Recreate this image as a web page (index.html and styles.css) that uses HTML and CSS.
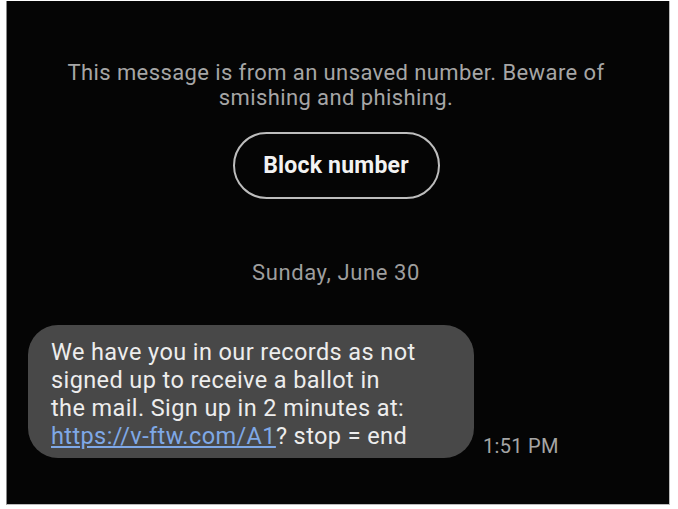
FILE: index.html
```html
<!DOCTYPE html>
<html>
<head>
<meta charset="utf-8">
<link rel="stylesheet" href="styles.css">
</head>
<body>
<div class="screen">
  <p class="warning">This message is from an unsaved number. Beware of<br>smishing and phishing.</p>
  <div class="block-row"><button class="block-btn">Block number</button></div>
  <p class="date">Sunday, June 30</p>
  <div class="msg-row">
    <div class="bubble">We have you in our records as not<br>signed up to receive a ballot in<br>the mail. Sign up in 2 minutes at:<br><a class="link" href="#">https://v-ftw.com/A1</a>? stop = end</div>
    <span class="time">1:51 PM</span>
  </div>
</div>
</body>
</html>
```
FILE: styles.css
```css
html, body {
  margin: 0;
  padding: 0;
  background: #ffffff;
}
body {
  width: 678px;
  height: 509px;
  padding: 1px 0 0 6px;
  box-sizing: border-box;
  font-family: Roboto, "Liberation Sans", sans-serif;
}
.screen {
  width: 664px;
  height: 504px;
  background: #050505;
  border-right: 1px solid #bbb;
  border-bottom: 1px solid #bbb;
  border-left: 1px solid #888;
  box-sizing: border-box;
  display: flex;
  flex-direction: column;
  padding-top: 59px;
}
.warning {
  margin: 0;
  text-align: center;
  color: #a6a6a6;
  font-size: 22px;
  line-height: 25px;
  letter-spacing: 0.4px;
  padding-right: 4px;
}
.block-row {
  display: flex;
  justify-content: center;
  margin-top: 22px;
}
.block-btn {
  width: 207px;
  height: 67px;
  border: 2px solid #bdbdbd;
  border-radius: 34px;
  background: transparent;
  color: #f2f2f2;
  font-family: Roboto, "Liberation Sans", sans-serif;
  font-weight: 700;
  font-size: 23px;
  letter-spacing: 0.2px;
  padding: 0;
  margin-left: -4px;
}
.date {
  margin: 61px 0 0 0;
  text-align: center;
  color: #9e9e9e;
  font-size: 22px;
  line-height: 26px;
  letter-spacing: 0.6px;
  padding-right: 4px;
}
.msg-row {
  display: flex;
  align-items: flex-end;
  margin-top: 39px;
  padding-left: 21px;
}
.bubble {
  width: 446px;
  height: 133px;
  box-sizing: border-box;
  background: #484848;
  border-radius: 30px;
  padding: 13px 0 0 23px;
  color: #ededed;
  font-size: 23.5px;
  line-height: 28px;
  letter-spacing: 0.4px;
  white-space: nowrap;
}
.link {
  color: #7fa8e6;
  text-decoration: underline;
}
.time {
  color: #a5a5a5;
  font-size: 20px;
  line-height: 24px;
  letter-spacing: 0.3px;
  margin-left: 9px;
}
```
